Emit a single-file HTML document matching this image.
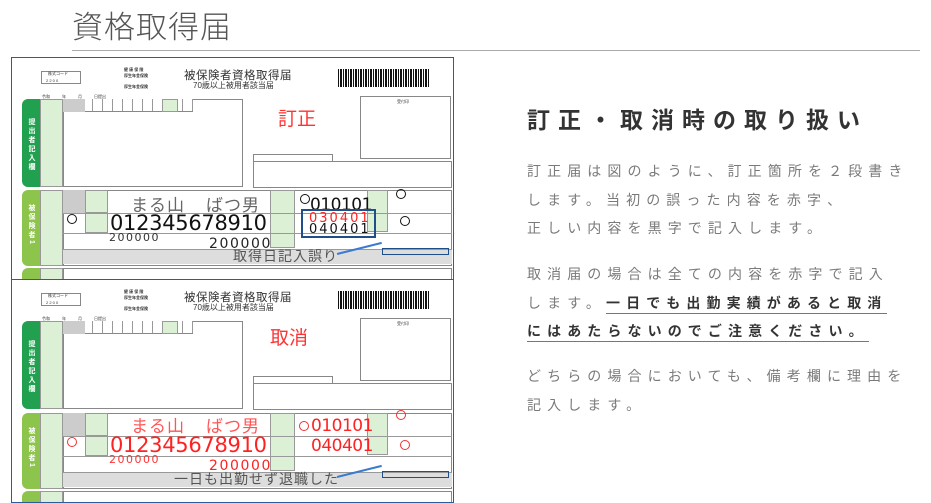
<!DOCTYPE html>
<html><head><meta charset="utf-8">
<style>
*{margin:0;padding:0;box-sizing:border-box}
body{width:931px;height:503px;background:#fff;position:relative;overflow:hidden;font-family:"Liberation Sans","Noto Sans CJK JP",sans-serif}
.a{position:absolute}
.h1{left:72px;top:2px;font-size:31px;color:#555;letter-spacing:1px;font-family:"Noto Sans CJK JP",sans-serif;font-weight:300}
.rule{left:72px;top:50px;width:848px;height:1px;background:#aaa}
.form{position:absolute;left:11px;width:443px;height:223px;border:1.5px solid #2e5b9a;background:#fff;overflow:hidden}
.form .a{position:absolute}
.g1{background:#21a04f;border-radius:6px 0 0 6px}
.g2{background:#8dc44b;border-radius:6px 0 0 6px}
.lg{background:#dcf0d5;border:1px solid #999}
.bx{border:1px solid #888;background:#fff}
.t{font-size:4px;color:#333;white-space:nowrap}
.vt{color:#fff;font-size:7px;font-weight:bold;writing-mode:vertical-rl;letter-spacing:2px}
.bar{background:repeating-linear-gradient(90deg,#111 0 1px,#fff 1px 2px,#111 2px 4px,#fff 4px 5px)}
.num{font-family:"DejaVu Sans",sans-serif;white-space:nowrap}
.circ{border:1.5px solid #111;border-radius:50%;width:10px;height:10px}
.rc{border-color:#e33}
.p{left:527px;font-size:14px;color:#7a7a7a;letter-spacing:6.1px;line-height:28.5px;font-family:"Noto Sans CJK JP",sans-serif;white-space:nowrap}
.u{color:#333;font-weight:bold;border-bottom:1.5px solid #777}
</style></head><body>
<div class="a h1">資格取得届</div>
<div class="a rule"></div>

<!-- FORM 1 -->
<div class="form" style="top:57px">
 <div class="a bx" style="left:29px;top:13px;width:40px;height:13px"></div>
 <div class="a t" style="left:36px;top:13px">株式コード</div>
 <div class="a t" style="left:34px;top:20px">2 2 0 0</div>
 <div class="a t" style="left:112px;top:9px;font-weight:bold">健 康 保 険<br>厚生年金保険<br><br>厚生年金保険</div>
 <div class="a" style="left:172px;top:9px;font-size:11.5px;color:#333;letter-spacing:.5px">被保険者資格取得届</div>
 <div class="a" style="left:181px;top:22px;font-size:8px;color:#333">70歳以上被用者該当届</div>
 <div class="a bar" style="left:326px;top:11px;width:91px;height:18px"></div>
 <div class="a t" style="left:30px;top:36px">令和　　　年　　　月　　　日提出</div>
 <div class="a g1" style="left:10px;top:41px;width:18px;height:88px"></div>
 <div class="a vt" style="left:14px;top:60px">提出者記入欄</div>
 <div class="a lg" style="left:28px;top:41px;width:23px;height:88px"></div>
 <div class="a bx" style="left:51px;top:41px;width:180px;height:88px"></div>
 <div class="a" style="left:51px;top:41px;width:130px;height:13px;background:repeating-linear-gradient(90deg,#fff 0 9px,#999 9px 10px);border-bottom:1px solid #888"></div>
 <div class="a" style="left:51px;top:41px;width:22px;height:13px;background:#ccc"></div>
 <div class="a lg" style="left:150px;top:41px;width:16px;height:13px"></div>
 <div class="a bx" style="left:348px;top:38px;width:91px;height:63px"></div>
 <div class="a t" style="left:385px;top:41px">受付印</div>
 <div class="a bx" style="left:241px;top:103px;width:199px;height:27px"></div>
 <div class="a bx" style="left:241px;top:96px;width:80px;height:8px"></div>
 <div class="a" style="left:266px;top:46px;font-size:19px;color:#f33">訂正</div>

 <div class="a g2" style="left:10px;top:132px;width:18px;height:76px"></div>
 <div class="a vt" style="left:14px;top:146px">被保険者1</div>
 <div class="a lg" style="left:28px;top:132px;width:23px;height:76px"></div>
 <div class="a bx" style="left:51px;top:132px;width:389px;height:76px"></div>
 <div class="a" style="left:51px;top:132px;width:22px;height:23px;background:#ccc"></div>
 <div class="a lg" style="left:73px;top:132px;width:23px;height:23px"></div>
 <div class="a lg" style="left:73px;top:155px;width:23px;height:20px"></div>
 <div class="a lg" style="left:258px;top:132px;width:25px;height:58px"></div>
 <div class="a lg" style="left:355px;top:132px;width:21px;height:42px"></div>
 <div class="a" style="left:51px;top:155px;width:389px;height:1px;background:#999"></div>
 <div class="a" style="left:51px;top:175px;width:389px;height:1px;background:#999"></div>
 <div class="a" style="left:51px;top:191px;width:389px;height:15px;background:#ddd;border-top:1px solid #999"></div>
 <div class="a" style="left:119px;top:133px;font-size:17px;color:#666;letter-spacing:1px">まる山</div>
 <div class="a" style="left:194px;top:133px;font-size:17px;color:#666;letter-spacing:1px">ばつ男</div>
 <div class="a num" style="left:98px;top:153px;font-size:21px;color:#111;letter-spacing:-0.3px">012345678910</div>
 <div class="a num" style="left:97px;top:173px;font-size:11px;color:#333;letter-spacing:1.5px">200000</div>
 <div class="a num" style="left:197px;top:178px;font-size:14px;color:#222;letter-spacing:1.6px">200000</div>
 <div class="a num" style="left:298px;top:137px;font-size:17px;color:#111;letter-spacing:-0.5px">010101</div>
 <div class="a num" style="left:297px;top:153px;font-size:13px;color:#f22;letter-spacing:2px">030401</div>
 <div class="a num" style="left:297px;top:164px;font-size:13px;color:#111;letter-spacing:2px">040401</div>
 <div class="a" style="left:289px;top:151px;width:75px;height:29px;border:2px solid #1f4f8a"></div>
 <div class="a" style="left:221px;top:188px;font-size:14px;color:#555;letter-spacing:1px">取得日記入誤り</div>
 <div class="a" style="left:370px;top:190px;width:67px;height:7px;border:1.5px solid #1f4f8a"></div>
 <div class="a" style="left:325px;top:195px;width:46px;height:1.5px;background:#3a7bd0;transform:rotate(-14deg);transform-origin:left"></div>
 <div class="a circ" style="left:288px;top:136px"></div>
 <div class="a circ" style="left:384px;top:131px"></div>
 <div class="a circ" style="left:388px;top:158px"></div>
 <div class="a circ" style="left:55px;top:156px"></div>
 <div class="a g2" style="left:10px;top:210px;width:18px;height:20px"></div>
 <div class="a lg" style="left:28px;top:210px;width:23px;height:20px"></div>
 <div class="a bx" style="left:51px;top:210px;width:389px;height:20px"></div>
</div>

<!-- FORM 2 -->
<div class="form" style="top:279px;height:224px">
 <div class="a bx" style="left:29px;top:13px;width:40px;height:13px"></div>
 <div class="a t" style="left:36px;top:13px">株式コード</div>
 <div class="a t" style="left:34px;top:20px">2 2 0 0</div>
 <div class="a t" style="left:112px;top:9px;font-weight:bold">健 康 保 険<br>厚生年金保険<br><br>厚生年金保険</div>
 <div class="a" style="left:172px;top:9px;font-size:11.5px;color:#333;letter-spacing:.5px">被保険者資格取得届</div>
 <div class="a" style="left:181px;top:22px;font-size:8px;color:#333">70歳以上被用者該当届</div>
 <div class="a bar" style="left:326px;top:11px;width:91px;height:18px"></div>
 <div class="a t" style="left:30px;top:36px">令和　　　年　　　月　　　日提出</div>
 <div class="a g1" style="left:10px;top:41px;width:18px;height:88px"></div>
 <div class="a vt" style="left:14px;top:60px">提出者記入欄</div>
 <div class="a lg" style="left:28px;top:41px;width:23px;height:88px"></div>
 <div class="a bx" style="left:51px;top:41px;width:180px;height:88px"></div>
 <div class="a" style="left:51px;top:41px;width:130px;height:13px;background:repeating-linear-gradient(90deg,#fff 0 9px,#999 9px 10px);border-bottom:1px solid #888"></div>
 <div class="a" style="left:51px;top:41px;width:22px;height:13px;background:#ccc"></div>
 <div class="a lg" style="left:150px;top:41px;width:16px;height:13px"></div>
 <div class="a bx" style="left:348px;top:38px;width:91px;height:63px"></div>
 <div class="a t" style="left:385px;top:41px">受付印</div>
 <div class="a bx" style="left:241px;top:103px;width:199px;height:27px"></div>
 <div class="a bx" style="left:241px;top:96px;width:80px;height:8px"></div>
 <div class="a" style="left:258px;top:43px;font-size:19px;color:#f33">取消</div>

 <div class="a g2" style="left:10px;top:133px;width:18px;height:76px"></div>
 <div class="a vt" style="left:14px;top:147px">被保険者1</div>
 <div class="a lg" style="left:28px;top:133px;width:23px;height:76px"></div>
 <div class="a bx" style="left:51px;top:133px;width:389px;height:76px"></div>
 <div class="a" style="left:51px;top:133px;width:22px;height:23px;background:#ccc"></div>
 <div class="a lg" style="left:73px;top:133px;width:23px;height:23px"></div>
 <div class="a lg" style="left:73px;top:156px;width:23px;height:20px"></div>
 <div class="a lg" style="left:258px;top:133px;width:25px;height:58px"></div>
 <div class="a lg" style="left:355px;top:133px;width:21px;height:42px"></div>
 <div class="a" style="left:51px;top:156px;width:389px;height:1px;background:#999"></div>
 <div class="a" style="left:51px;top:176px;width:389px;height:1px;background:#999"></div>
 <div class="a" style="left:51px;top:192px;width:389px;height:15px;background:#ddd;border-top:1px solid #999"></div>
 <div class="a" style="left:119px;top:132px;font-size:17px;color:#f55;letter-spacing:1px">まる山</div>
 <div class="a" style="left:194px;top:132px;font-size:17px;color:#f55;letter-spacing:1px">ばつ男</div>
 <div class="a num" style="left:98px;top:153px;font-size:21px;color:#f22;letter-spacing:-0.3px">012345678910</div>
 <div class="a num" style="left:97px;top:173px;font-size:11px;color:#f33;letter-spacing:1.5px">200000</div>
 <div class="a num" style="left:197px;top:178px;font-size:14px;color:#f22;letter-spacing:1.6px">200000</div>
 <div class="a num" style="left:299px;top:136px;font-size:17px;color:#f22;letter-spacing:-0.5px">010101</div>
 <div class="a num" style="left:299px;top:156px;font-size:17px;color:#f22;letter-spacing:-0.5px">040401</div>
 <div class="a" style="left:162px;top:189px;font-size:14px;color:#555;letter-spacing:1px">一日も出勤せず退職した</div>
 <div class="a" style="left:370px;top:191px;width:67px;height:7px;border:1.5px solid #1f4f8a"></div>
 <div class="a" style="left:325px;top:196px;width:46px;height:1.5px;background:#3a7bd0;transform:rotate(-14deg);transform-origin:left"></div>
 <div class="a circ rc" style="left:287px;top:141px"></div>
 <div class="a circ rc" style="left:384px;top:130px"></div>
 <div class="a circ rc" style="left:388px;top:160px"></div>
 <div class="a circ rc" style="left:55px;top:157px"></div>
 <div class="a g2" style="left:10px;top:211px;width:18px;height:20px"></div>
 <div class="a lg" style="left:28px;top:211px;width:23px;height:20px"></div>
 <div class="a bx" style="left:51px;top:211px;width:389px;height:20px"></div>
</div>

<div class="a" style="left:527px;top:101px;font-size:23px;font-weight:bold;color:#333;letter-spacing:8px;font-family:'Noto Sans CJK JP',sans-serif;white-space:nowrap">訂正・取消時の取り扱い</div>
<div class="a p" style="top:157px">訂正届は図のように、訂正箇所を２段書き<br>します。当初の誤った内容を赤字、<br>正しい内容を黒字で記入します。</div>
<div class="a p" style="top:260px">取消届の場合は全ての内容を赤字で記入<br>します。<span class="u">一日でも出勤実績があると取消</span><br><span class="u">にはあたらないのでご注意ください。</span></div>
<div class="a p" style="top:362px">どちらの場合においても、備考欄に理由を<br>記入します。</div>
</body></html>
